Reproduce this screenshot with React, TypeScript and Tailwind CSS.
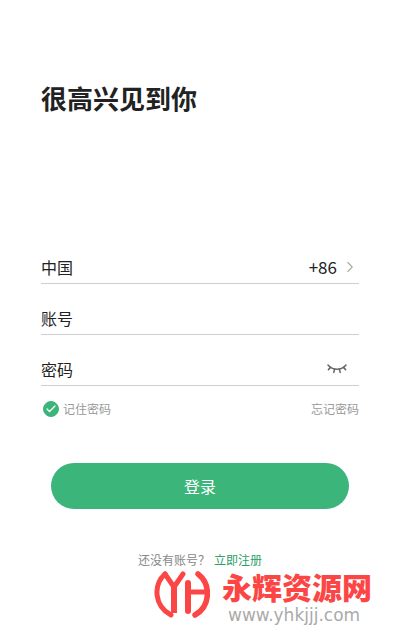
import React, { useState } from "react";
import { Check, ChevronRight } from "lucide-react";

const ClosedEyeIcon = () => (
  <svg width="20" height="10" viewBox="0 0 20 10" fill="none" stroke="#666666" strokeWidth="1.5" strokeLinecap="round">
    <path d="M1 1C5.5 6.6 14.5 6.6 19 1" />
    <path d="M3.6 3.4L1.4 5.6M7.6 5.1L6.8 8.4M12.4 5.1L13.2 8.4M16.4 3.4L18.6 5.6" />
  </svg>
);

const BrandMark = () => (
  <svg width="56" height="48" viewBox="0 0 56 48" fill="none" stroke="#fc4646" strokeLinecap="round" aria-hidden="true">
    <path d="M11 4C-1 15 0 36 17 45" strokeWidth="5" />
    <path d="M11 4L20 17L29 4" strokeWidth="5" strokeLinejoin="round" />
    <path d="M20 16V43" strokeWidth="6" strokeLinecap="butt" />
    <path d="M34 13V41" strokeWidth="6" />
    <path d="M34 22H51" strokeWidth="5" />
    <path d="M44 4C57 14 57 36 41 45" strokeWidth="5.5" />
  </svg>
);

const App: React.FC = () => {
  const [account, setAccount] = useState("");
  const [password, setPassword] = useState("");
  const [showPassword, setShowPassword] = useState(false);
  const [remember, setRemember] = useState(true);

  return (
    <div className="min-h-screen bg-white font-['Noto_Sans_CJK_SC',sans-serif] text-[#222222]">
      <main className="px-[41px] pt-[78px]">
        <h1 className="text-[26px] leading-10 font-bold">很高兴见到你</h1>

        <form className="mt-[134px]" onSubmit={(e) => e.preventDefault()}>
          <button
            type="button"
            className="flex h-8 w-full items-center border-b border-[#cfcfcf] pb-0.5 text-base"
          >
            <span>中国</span>
            <span className="ml-auto text-[17px]">+86</span>
            <ChevronRight className="ml-1 text-[#aaaaaa]" size={18} strokeWidth={1.5} />
          </button>

          <div className="mt-[19px] flex h-8 items-center border-b border-[#cfcfcf] pb-0.5 text-base">
            <label htmlFor="account">账号</label>
            <input
              id="account"
              value={account}
              onChange={(e) => setAccount(e.target.value)}
              className="ml-4 min-w-0 flex-1 outline-none"
            />
          </div>

          <div className="mt-[19px] flex h-8 items-center border-b border-[#cfcfcf] pb-0.5 text-base">
            <label htmlFor="password">密码</label>
            <input
              id="password"
              type={showPassword ? "text" : "password"}
              value={password}
              onChange={(e) => setPassword(e.target.value)}
              className="ml-4 min-w-0 flex-1 outline-none"
            />
            <button
              type="button"
              aria-label="显示密码"
              onClick={() => setShowPassword(!showPassword)}
              className="px-3"
            >
              <ClosedEyeIcon />
            </button>
          </div>

          <div className="mt-[13px] flex items-center justify-between pl-0.5 text-xs leading-5 text-[#999999]">
            <label className="flex items-center gap-1">
              <span className="relative flex">
                <input
                  type="checkbox"
                  checked={remember}
                  onChange={(e) => setRemember(e.target.checked)}
                  className="size-4 appearance-none rounded-full border border-[#3cb57a] checked:bg-[#3cb57a]"
                />
                {remember && (
                  <Check className="pointer-events-none absolute top-0.5 left-0.5 text-white" size={12} strokeWidth={2.5} />
                )}
              </span>
              记住密码
            </label>
            <a href="#forgot">忘记密码</a>
          </div>

          <div className="mt-11 px-[10px]">
            <button type="submit" className="h-[46px] w-full rounded-full bg-[#3cb57a] text-base text-white">
              登录
            </button>
          </div>
        </form>

        <p className="mt-[41px] flex justify-center gap-1 text-xs leading-5 text-[#888888]">
          <span>还没有账号？</span>
          <a href="#register" className="text-[#2f9e6a]">立即注册</a>
        </p>
      </main>

      <footer className="flex items-start justify-end gap-3 pr-7">
        <BrandMark />
        <div>
          <p className="text-[30px] leading-8 font-black text-[#fc4646]">永辉资源网</p>
          <p className="pt-1.5 pl-1.5 font-['DejaVu_Sans',sans-serif] text-[17px] leading-[14px] text-[#aaaaaa]">www.yhkjjj.com</p>
        </div>
      </footer>
    </div>
  );
};

export default App;
